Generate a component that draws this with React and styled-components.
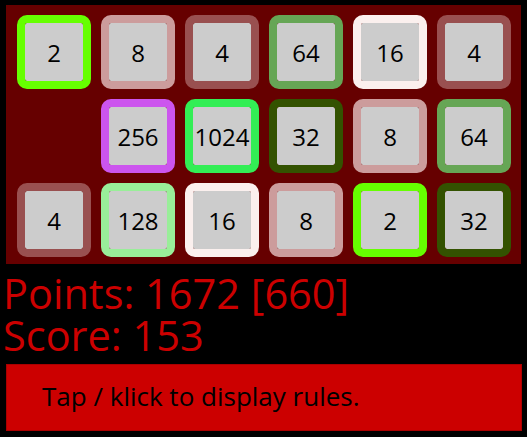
import React from 'react';
import styled, { createGlobalStyle } from 'styled-components';

const GlobalStyle = createGlobalStyle`
	html, body {
		margin: 0;
		padding: 0;
		background: #000;
	}
	body {
		font-family: 'Open Sans', 'Noto Sans', sans-serif;
	}
`;

const Page = styled.div`
	padding-top: 5px;
	width: 527px;
`;

const Board = styled.div`
	display: grid;
	grid-template-columns: repeat(6, 74px);
	grid-auto-rows: 74px;
	gap: 10px;
	width: 515px;
	box-sizing: border-box;
	margin: 0 6px;
	padding: 10px 10px 7px 11px;
	background: #660000;
`;

const Tile = styled.div`
	box-sizing: border-box;
	display: flex;
	align-items: center;
	justify-content: center;
	border: 8px solid ${(p) => p.$ring};
	border-radius: 10px;
	background: #cccccc;
	background-clip: padding-box;
	font-size: 24px;
	color: #000;
	grid-column: ${(p) => p.$col || 'auto'};
`;

const Stats = styled.div`
	margin-top: 8px;
	padding-left: 3px;
	color: #cc0000;
	font-size: 41.5px;
	line-height: 42px;
`;

const RulesButton = styled.div`
	box-sizing: border-box;
	margin: 8px 6px 0 6px;
	width: 516px;
	height: 67px;
	display: flex;
	align-items: center;
	padding: 0 0 3px 35px;
	background: #cc0000;
	border: 1px solid #aa0000;
	color: #000;
	font-size: 26px;
	cursor: pointer;
`;

const RING = {
	2: '#66ff00',
	4: '#995050',
	8: '#cc9c9c',
	16: '#fbf0ee',
	32: '#335200',
	64: '#66a655',
	128: '#99ee99',
	256: '#cc55ee',
	1024: '#33ee55',
};

const rows = [
	[2, 8, 4, 64, 16, 4],
	[null, 256, 1024, 32, 8, 64],
	[4, 128, 16, 8, 2, 32],
];

const App = () => {
	return (
		<Page>
			<GlobalStyle />
			<Board>
				{rows.map((row, r) =>
					row.map((value, c) =>
						value === null ? null : (
							<Tile key={`${r}-${c}`} $ring={RING[value]} $col={c === 1 && row[0] === null ? 2 : null}>
								{value}
							</Tile>
						)
					)
				)}
			</Board>
			<Stats>
				Points: 1672 [660]
				<br />
				Score: 153
			</Stats>
			<RulesButton>Tap / klick to display rules.</RulesButton>
		</Page>
	);
};

export default App;
